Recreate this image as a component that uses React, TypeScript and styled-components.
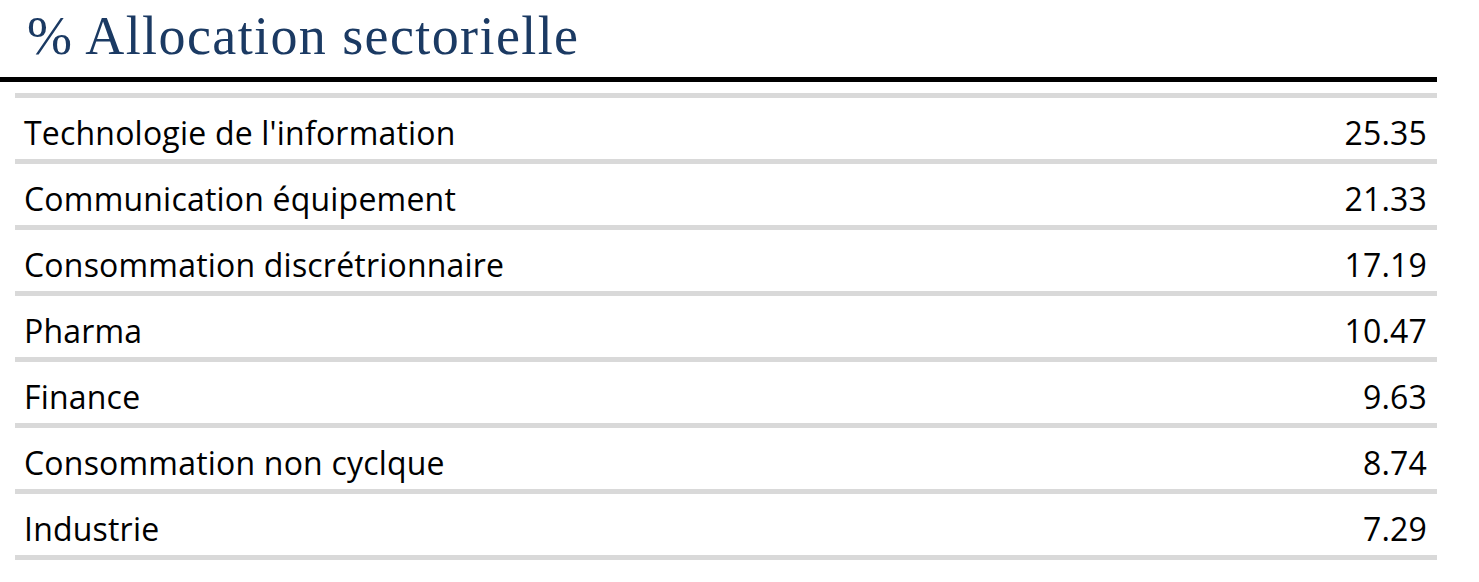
import React from 'react';
import styled, { createGlobalStyle } from 'styled-components';

const GlobalStyle = createGlobalStyle`
  body {
    margin: 0;
    background: #ffffff;
  }
`;

const Page = styled.div`
  width: 1437px;
`;

const Header = styled.div`
  border-bottom: 5px solid #000000;
  height: 82px;
  box-sizing: border-box;
`;

const Title = styled.h1`
  margin: 0;
  padding: 4px 0 0 27px;
  font-family: 'Liberation Serif', 'DejaVu Serif', serif;
  font-weight: normal;
  font-size: 54px;
  line-height: 64px;
  letter-spacing: 1.4px;
  color: #1b3a63;
`;

const Table = styled.div`
  margin: 11px 0 0 15px;
  border-bottom: 5px solid #d9d9d9;
`;

const Row = styled.div`
  display: flex;
  justify-content: space-between;
  align-items: center;
  height: 66px;
  box-sizing: border-box;
  border-top: 5px solid #d9d9d9;
  padding: 8px 10px 0 9px;
  font-family: 'Open Sans', 'Noto Sans', sans-serif;
  font-size: 32px;
  letter-spacing: 0.2px;
  color: #000000;
`;

const Label = styled.span``;

const Value = styled.span`
  text-align: right;
`;

const sectors = [
  { name: "Technologie de l'information", value: '25.35' },
  { name: 'Communication équipement', value: '21.33' },
  { name: 'Consommation discrétrionnaire', value: '17.19' },
  { name: 'Pharma', value: '10.47' },
  { name: 'Finance', value: '9.63' },
  { name: 'Consommation non cyclque', value: '8.74' },
  { name: 'Industrie', value: '7.29' },
];

export default function App() {
  return (
    <Page>
      <GlobalStyle />
      <Header>
        <Title>% Allocation sectorielle</Title>
      </Header>
      <Table>
        {sectors.map((s) => (
          <Row key={s.name}>
            <Label>{s.name}</Label>
            <Value>{s.value}</Value>
          </Row>
        ))}
      </Table>
    </Page>
  );
}
